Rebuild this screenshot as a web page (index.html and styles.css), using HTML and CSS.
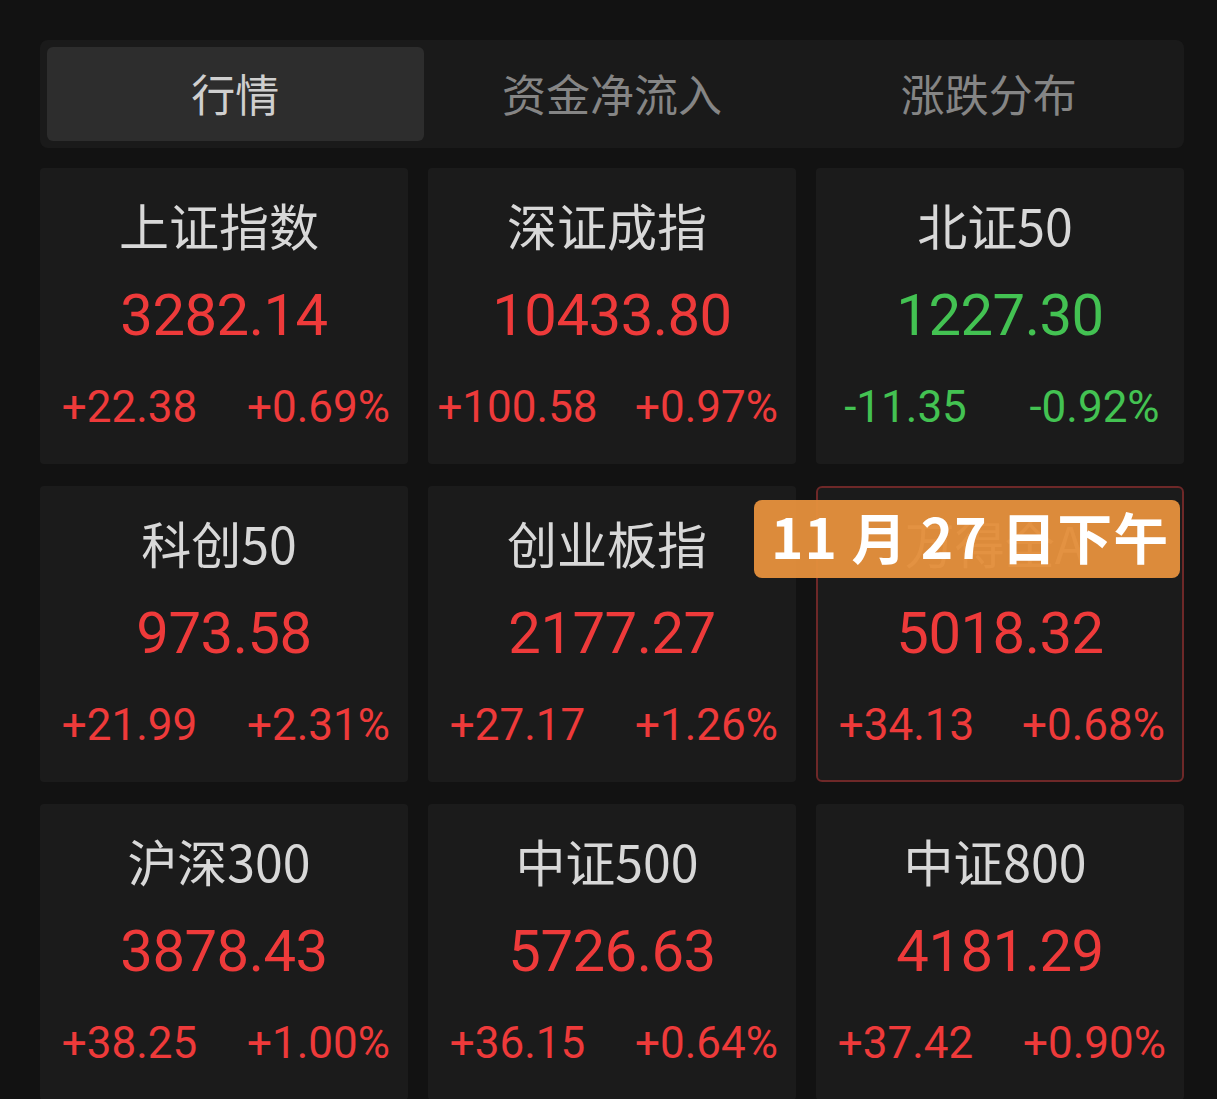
FILE: index.html
```html
<!DOCTYPE html>
<html lang="zh-CN">
<head>
<meta charset="utf-8">
<title>行情</title>
<link rel="stylesheet" href="styles.css">
</head>
<body>
<div class="page">
  <div class="tabs">
    <div class="tab active">行情</div>
    <div class="tab">资金净流入</div>
    <div class="tab">涨跌分布</div>
  </div>
  <div class="grid">
    <div class="card">
      <div class="title">上证指数</div>
      <div class="value up">3282.14</div>
      <div class="changes up"><span>+22.38</span><span>+0.69%</span></div>
    </div>
    <div class="card">
      <div class="title">深证成指</div>
      <div class="value up">10433.80</div>
      <div class="changes up"><span>+100.58</span><span>+0.97%</span></div>
    </div>
    <div class="card">
      <div class="title">北证50</div>
      <div class="value down">1227.30</div>
      <div class="changes down"><span>-11.35</span><span>-0.92%</span></div>
    </div>
    <div class="card">
      <div class="title">科创50</div>
      <div class="value up">973.58</div>
      <div class="changes up"><span>+21.99</span><span>+2.31%</span></div>
    </div>
    <div class="card">
      <div class="title">创业板指</div>
      <div class="value up">2177.27</div>
      <div class="changes up"><span>+27.17</span><span>+1.26%</span></div>
    </div>
    <div class="card selected">
      <div class="title hidden-title">万得全A</div>
      <div class="value up">5018.32</div>
      <div class="changes up"><span>+34.13</span><span>+0.68%</span></div>
      <div class="badge">11 月 27 日下午</div>
    </div>
    <div class="card">
      <div class="title">沪深300</div>
      <div class="value up">3878.43</div>
      <div class="changes up"><span>+38.25</span><span>+1.00%</span></div>
    </div>
    <div class="card">
      <div class="title">中证500</div>
      <div class="value up">5726.63</div>
      <div class="changes up"><span>+36.15</span><span>+0.64%</span></div>
    </div>
    <div class="card">
      <div class="title">中证800</div>
      <div class="value up">4181.29</div>
      <div class="changes up"><span>+37.42</span><span>+0.90%</span></div>
    </div>
  </div>
</div>
</body>
</html>
```
FILE: styles.css
```css
html, body {
  margin: 0;
  padding: 0;
  background: #121212;
  overflow: hidden;
}
body {
  width: 1217px;
  height: 1099px;
  font-family: "Noto Sans CJK SC", "Noto Sans", sans-serif;
}
.page {
  padding: 40px 33px 0 40px;
}
.tabs {
  display: grid;
  grid-template-columns: 1fr 1fr 1fr;
  padding: 7px;
  height: 94px;
  background: #1a1a1a;
  border-radius: 8px;
}
.tab {
  display: flex;
  align-items: center;
  justify-content: center;
  font-size: 44px;
  color: #858585;
  border-radius: 6px;
  padding-bottom: 3px;
}
.tab.active {
  background: #2d2d2d;
  color: #cfcfcf;
}
.grid {
  margin-top: 20px;
  display: grid;
  grid-template-columns: repeat(3, 368px);
  grid-auto-rows: 296px;
  column-gap: 20px;
  row-gap: 22px;
}
.card {
  position: relative;
  background: #1b1b1b;
  border-radius: 4px;
  display: flex;
  flex-direction: column;
  align-items: stretch;
  padding-top: 24px;
  box-sizing: border-box;
}
.card.selected {
  border: 2px solid #6e2828;
  border-radius: 6px;
  padding-top: 22px;
}
.title {
  text-align: center;
  font-size: 50px;
  line-height: 64px;
  color: #d8d8d8;
  padding-right: 10px;
}
.hidden-title {
  color: #bdbdbd;
}
.value {
  margin-top: 24px;
  text-align: center;
  font-family: Roboto, "Noto Sans", sans-serif;
  font-size: 58px;
  line-height: 70px;
  letter-spacing: -0.5px;
}
.changes {
  margin-top: 32px;
  display: grid;
  grid-template-columns: 1fr 1fr;
  column-gap: 10px;
  font-family: Roboto, "Noto Sans", sans-serif;
  font-size: 44px;
  line-height: 50px;
  text-align: center;
}
.up { color: #ee3a3a; }
.down { color: #43c252; }
.badge {
  position: absolute;
  left: -64px;
  top: 12px;
  width: 426px;
  height: 78px;
  box-sizing: border-box;
  padding-left: 17px;
  padding-bottom: 8px;
  display: flex;
  align-items: center;
  background: rgba(228, 144, 60, 0.96);
  border-radius: 8px;
  color: #ffffff;
  font-weight: 700;
  font-size: 55px;
  letter-spacing: 1px;
  white-space: nowrap;
}
```
